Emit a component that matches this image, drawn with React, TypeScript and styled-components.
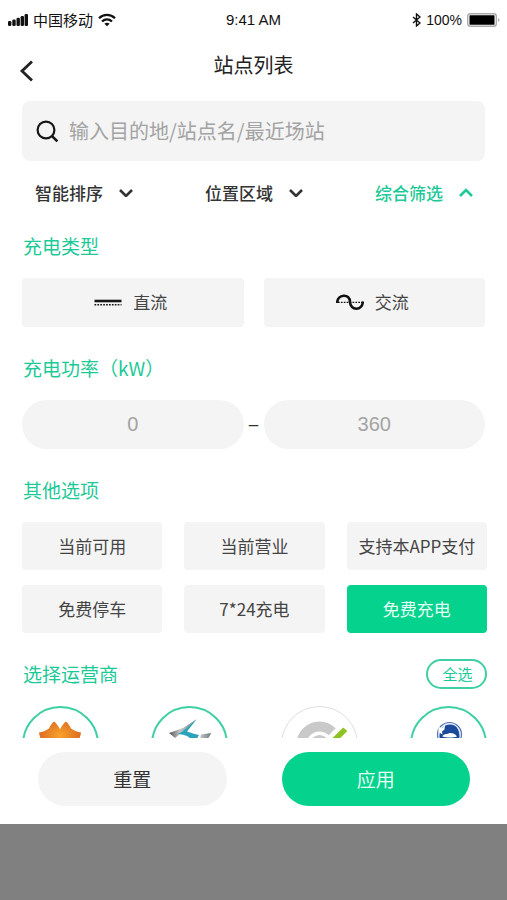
import React, { useState } from "react";
import styled, { createGlobalStyle } from "styled-components";

const green = "#05d38d";
const greenText = "#1cc997";
const fill = "#f4f4f4";

const GlobalStyle = createGlobalStyle`
  *, *::before, *::after { box-sizing: border-box; }
  body {
    margin: 0;
    background: #808080;
    color: #333;
    font-family: "Noto Sans CJK SC", sans-serif;
  }
  button, input { font-family: inherit; }
  button { border: 0; padding: 0; background: none; color: inherit; cursor: pointer; }
`;

const Sheet = styled.main`
  display: flex;
  flex-direction: column;
  height: calc(100vh - 76px);
  background: #fff;
`;

const StatusBar = styled.div`
  display: grid;
  grid-template-columns: 1fr auto 1fr;
  align-items: center;
  flex: none;
  height: 40px;
  padding: 0 7px;
  color: #111;
  font-size: 15px;
  line-height: 20px;
`;

const StatusGroup = styled.div<{ $end?: boolean }>`
  display: flex;
  align-items: center;
  justify-content: ${(p) => (p.$end ? "flex-end" : "flex-start")};
  gap: 5px;
`;

const Latin = styled.span<{ $size: number }>`
  font-family: "Liberation Sans", sans-serif;
  font-size: ${(p) => p.$size}px;
`;

const Header = styled.header`
  display: grid;
  grid-template-columns: 1fr auto 1fr;
  flex: none;
  height: 50px;
  padding: 0 19px;
`;

const BackButton = styled.button`
  display: flex;
  align-items: center;
  width: 32px;
  padding-top: 12px;
`;

const Title = styled.h1`
  margin: 0;
  color: #222;
  font-size: 20px;
  font-weight: 400;
  line-height: 50px;
`;

const SearchBox = styled.label`
  display: flex;
  align-items: center;
  flex: none;
  gap: 10px;
  height: 60px;
  margin: 11px 22px 0;
  padding: 0 14px;
  border-radius: 8px;
  background: ${fill};
`;

const SearchInput = styled.input`
  flex: 1;
  min-width: 0;
  border: 0;
  padding: 0;
  outline: 0;
  background: transparent;
  color: #333;
  font-size: 20px;
  line-height: 30px;
  &::placeholder { color: #a3a3a3; opacity: 1; }
`;

const Tabs = styled.nav`
  display: flex;
  justify-content: space-between;
  flex: none;
  height: 64px;
  padding: 0 34px 2px 35px;
`;

const Tab = styled.button<{ $active: boolean }>`
  display: flex;
  align-items: center;
  gap: 16px;
  color: ${(p) => (p.$active ? greenText : "#333")};
  font-size: 17px;
  font-weight: 500;
`;

const Filters = styled.div`
  display: flex;
  flex: 1;
  flex-direction: column;
  gap: 26px;
  min-height: 0;
  padding: 6px 20px 0 22px;
  overflow-x: hidden;
  overflow-y: auto;
  scrollbar-width: none;
`;

const Section = styled.section<{ $inset?: boolean }>`
  display: flex;
  flex: none;
  flex-direction: column;
  gap: 17px;
  padding-right: ${(p) => (p.$inset ? 2 : 0)}px;
`;

const SectionHead = styled.div`
  display: flex;
  align-items: center;
  justify-content: space-between;
`;

const SectionTitle = styled.h2`
  margin: 0;
  padding-left: 1px;
  color: ${greenText};
  font-size: 19px;
  font-weight: 400;
  line-height: 30px;
`;

const OptionGrid = styled.div<{ $columns: number }>`
  display: grid;
  grid-template-columns: repeat(${(p) => p.$columns}, minmax(0, 1fr));
  gap: 15px ${(p) => (p.$columns === 2 ? 20 : 22)}px;
`;

const Option = styled.button<{ $on: boolean; $tall?: boolean }>`
  display: flex;
  align-items: center;
  justify-content: center;
  gap: 11px;
  height: ${(p) => (p.$tall ? 49 : 48)}px;
  padding: 0 ${(p) => (p.$tall ? 4 : 0)}px 2px 0;
  border-radius: 4px;
  background: ${(p) => (p.$on ? green : fill)};
  color: ${(p) => (p.$on ? "#e4fff4" : "#444")};
  font-size: 17px;
  white-space: nowrap;
`;

const RangeRow = styled.div`
  display: flex;
  align-items: center;
`;

const RangeInput = styled.input`
  flex: 1;
  min-width: 0;
  height: 49px;
  border: 0;
  border-radius: 25px;
  outline: 0;
  background: ${fill};
  color: #333;
  font-family: "Liberation Sans", sans-serif;
  font-size: 20px;
  text-align: center;
  &::placeholder { color: #a3a3a3; opacity: 1; }
`;

const RangeDash = styled.span`
  width: 20px;
  color: #333;
  font-family: "Liberation Sans", sans-serif;
  font-size: 17px;
  line-height: 30px;
  text-align: center;
`;

const SelectAll = styled.button`
  width: 61px;
  height: 30px;
  padding-left: 2px;
  border: 2px solid #3fcfa4;
  border-radius: 15px;
  color: ${greenText};
  font-size: 15px;
  line-height: 24px;
`;

const Operators = styled.div`
  display: flex;
  justify-content: space-between;
`;

const Operator = styled.button<{ $on: boolean }>`
  width: 77px;
  height: 77px;
  border: ${(p) => (p.$on ? "2px solid #3fcfa4" : "1px solid #dedede")};
  border-radius: 50%;
  overflow: hidden;
  svg { display: block; margin: ${(p) => (p.$on ? -2 : -1)}px; }
`;

const Footer = styled.footer`
  display: flex;
  flex: none;
  gap: 55px;
  padding: 14px 37px 18px 38px;
`;

const Action = styled.button<{ $primary?: boolean }>`
  flex: 1;
  height: 54px;
  padding-bottom: 2px;
  border-radius: 27px;
  background: ${(p) => (p.$primary ? green : fill)};
  color: ${(p) => (p.$primary ? "#e4fff4" : "#333")};
  font-size: 19px;
`;

const SignalIcon = () => (
  <svg width="21" height="14" viewBox="0 0 21 14" fill="#111" aria-hidden="true">
    <rect x="1" y="8" width="3.4" height="5" rx="1.2" />
    <rect x="5.3" y="6.5" width="3.4" height="6.5" rx="1.2" />
    <rect x="9.5" y="4.8" width="3.4" height="8.2" rx="1.2" />
    <rect x="13.6" y="3" width="3.4" height="10" rx="1.2" />
    <rect x="17.6" y="1" width="3.4" height="12" rx="1.2" />
  </svg>
);

const WifiIcon = () => (
  <svg width="18" height="14" viewBox="0 0 18 14" fill="none" stroke="#111" strokeWidth="2.3" aria-hidden="true">
    <path d="M1 5.2C5.5.7 12.5.7 17 5.2" />
    <path d="M4 8.5c2.9-2.7 7.1-2.7 10 0" />
    <path d="M6.4 10.7c1.5-1.3 3.7-1.3 5.2 0L9 13.3z" fill="#111" stroke="none" />
  </svg>
);

const BluetoothIcon = () => (
  <svg width="9" height="14" viewBox="0 0 9 14" fill="none" stroke="#111" strokeWidth="1.4" aria-hidden="true">
    <path d="M1 4l7 6-3.5 3V1L8 4l-7 6" />
  </svg>
);

const BatteryIcon = () => (
  <svg width="33" height="14" viewBox="0 0 33 14" aria-hidden="true">
    <rect x="0.7" y="0.7" width="28.6" height="12.6" rx="2.5" fill="#fff" stroke="#aaa" strokeWidth="1.4" />
    <rect x="2.5" y="2.3" width="25" height="9.4" rx="0.5" fill="#000" />
    <path d="M31 5v4c2-.8 2-3.2 0-4z" fill="#aaa" />
  </svg>
);

const BackIcon = () => (
  <svg width="15" height="22" viewBox="0 0 15 22" fill="none" stroke="#222" strokeWidth="2.8" aria-hidden="true">
    <path d="M13 1.5L3 11l10 9.5" />
  </svg>
);

const SearchIcon = () => (
  <svg width="23" height="23" viewBox="0 0 23 23" fill="none" stroke="#161616" strokeWidth="2.2" aria-hidden="true">
    <circle cx="10" cy="10" r="8.4" />
    <path d="M15.8 15.8l5.6 5.6" strokeWidth="2.6" />
  </svg>
);

const Chevron = ({ up }: { up: boolean }) => (
  <svg width="14" height="10" viewBox="0 0 14 10" fill="none" stroke="currentColor" strokeWidth="2.6" aria-hidden="true">
    <path d={up ? "M1 9l6-6 6 6" : "M1 3l6 6 6-6"} />
  </svg>
);

const DirectIcon = () => (
  <svg width="28" height="16" viewBox="0 0 28 16" fill="none" stroke="#161616" aria-hidden="true">
    <path d="M0.5 7h27" strokeWidth="2.6" />
    <path d="M0.5 10.8h27" strokeWidth="1.6" strokeDasharray="1.7 1.2" />
  </svg>
);

const AlternatingIcon = () => (
  <svg width="28" height="18" viewBox="0 0 28 18" fill="none" stroke="#111" aria-hidden="true">
    <path d="M1.2 10C1.2 1 14 0 14 9s12.8 9 12.8-.5" strokeWidth="2.6" />
    <path d="M2 9.3h25" strokeWidth="1.2" strokeDasharray="1.7 1.2" />
  </svg>
);

const LotusLogo = () => (
  <svg width="78" height="78" viewBox="0 0 78 78" aria-hidden="true">
    <defs>
      <radialGradient id="lotus" cx="0.5" cy="0.4" r="0.5">
        <stop offset="0" stopColor="#f9a32a" />
        <stop offset="1" stopColor="#dc6a22" />
      </radialGradient>
    </defs>
    <path d="M17 26.5c3.500-.5 6.500-1.500 10-4 1.500-3 3-5.500 5-7 2.500 2 4.500 4.500 6 8 1.500-3.500 3.500-6 6-8 2 1.500 3.500 4 5 7 3.500 2.500 6.500 3.500 10 4-1 9-8 17.500-21 23.500-13-6-20-14.500-21-23.500z" fill="url(#lotus)" />
  </svg>
);

const WingLogo = () => (
  <svg width="78" height="78" viewBox="0 0 78 78" aria-hidden="true">
    <defs>
      <linearGradient id="wing" x1="0" x2="1">
        <stop offset="0" stopColor="#555" />
        <stop offset="0.4" stopColor="#c6c6c6" />
        <stop offset="1" stopColor="#6c7c80" />
      </linearGradient>
    </defs>
    <path d="M45.7 13.3L31 26.500l-7 5.500-6-5 14-5z" fill="url(#wing)" />
    <path d="M45.7 13.3L36 25.500c4 1.500 8 2.500 12 3.500l-2 3.500h-7c-2-3-7-4-12-4.500l5-3z" fill="#2ba3ba" />
    <path d="M50 28.500l10-1.500c-1 4-4 7-10 10l-8 3 7-7z" fill="url(#wing)" />
  </svg>
);

const GaugeLogo = () => (
  <svg width="78" height="78" viewBox="0 0 78 78" aria-hidden="true">
    <path d="M54.7 22.3A23 23 0 1 0 54.7 54.7L47.7 47.7A13 13 0 1 1 47.7 29.3z" fill="#c9c9c9" />
    <circle cx="38.5" cy="38.5" r="9.5" fill="#c9c9c9" />
    <path d="M62.3 21.5l4 3.5-20 20-4-4z" fill="#8ec21f" />
  </svg>
);

const DolphinLogo = () => (
  <svg width="78" height="78" viewBox="0 0 78 78" aria-hidden="true">
    <circle cx="39.5" cy="28.5" r="12" fill="#e8effa" stroke="#5575b6" strokeWidth="1.2" />
    <path d="M29.5 31C29 23 34 18.5 40 18.5c6 0 9.5 4.5 9.5 12.5-2 5-5.5 7-10 7s-8.500-2-10-7z" fill="#1b4a9c" />
    <path d="M28.5 21l3.5 1 3-3-.5 4.5-2.5 2 .5 3-4-2.5z" fill="#fff" />
    <path d="M32.5 30.500c1-3 4-2 6-3s6-.5 8.500 3c-3 1.300-11 1.500-14.500 0z" fill="#fff" />
  </svg>
);

const tabs = ["智能排序", "位置区域", "综合筛选"];
const extras = ["当前可用", "当前营业", "支持本APP支付", "免费停车", "7*24充电", "免费充电"];
const operators = [
  { id: "lotus", label: "运营商一", logo: <LotusLogo /> },
  { id: "wing", label: "运营商二", logo: <WingLogo /> },
  { id: "gauge", label: "运营商三", logo: <GaugeLogo /> },
  { id: "dolphin", label: "运营商四", logo: <DolphinLogo /> },
];

export default function App() {
  const [tab, setTab] = useState("综合筛选");
  const [selected, setSelected] = useState<string[]>(["免费充电", "lotus", "wing", "dolphin"]);
  const has = (id: string) => selected.includes(id);
  const toggle = (id: string) =>
    setSelected((s) => (s.includes(id) ? s.filter((x) => x !== id) : [...s, id]));
  const selectAll = () =>
    setSelected((s) => Array.from(new Set([...s, ...operators.map((o) => o.id)])));

  return (
    <>
      <GlobalStyle />
      <Sheet>
        <StatusBar>
          <StatusGroup>
            <SignalIcon />
            <span>中国移动</span>
            <WifiIcon />
          </StatusGroup>
          <Latin $size={15}>9:41 AM</Latin>
          <StatusGroup $end>
            <BluetoothIcon />
            <Latin $size={14}>100%</Latin>
            <BatteryIcon />
          </StatusGroup>
        </StatusBar>
        <Header>
          <BackButton aria-label="返回">
            <BackIcon />
          </BackButton>
          <Title>站点列表</Title>
        </Header>
        <SearchBox>
          <SearchIcon />
          <SearchInput type="text" aria-label="搜索" placeholder="输入目的地/站点名/最近场站" />
        </SearchBox>
        <Tabs>
          {tabs.map((t) => (
            <Tab key={t} $active={t === tab} aria-expanded={t === tab} onClick={() => setTab(t)}>
              {t}
              <Chevron up={t === tab} />
            </Tab>
          ))}
        </Tabs>
        <Filters>
          <Section $inset>
            <SectionTitle>充电类型</SectionTitle>
            <OptionGrid $columns={2}>
              <Option $tall $on={has("直流")} aria-pressed={has("直流")} onClick={() => toggle("直流")}>
                <DirectIcon />
                直流
              </Option>
              <Option $tall $on={has("交流")} aria-pressed={has("交流")} onClick={() => toggle("交流")}>
                <AlternatingIcon />
                交流
              </Option>
            </OptionGrid>
          </Section>
          <Section $inset>
            <SectionTitle>充电功率（kW）</SectionTitle>
            <RangeRow>
              <RangeInput type="text" inputMode="numeric" aria-label="最小功率" placeholder="0" />
              <RangeDash>–</RangeDash>
              <RangeInput type="text" inputMode="numeric" aria-label="最大功率" placeholder="360" />
            </RangeRow>
          </Section>
          <Section>
            <SectionTitle>其他选项</SectionTitle>
            <OptionGrid $columns={3}>
              {extras.map((e) => (
                <Option key={e} $on={has(e)} aria-pressed={has(e)} onClick={() => toggle(e)}>
                  {e}
                </Option>
              ))}
            </OptionGrid>
          </Section>
          <Section>
            <SectionHead>
              <SectionTitle>选择运营商</SectionTitle>
              <SelectAll onClick={selectAll}>全选</SelectAll>
            </SectionHead>
            <Operators>
              {operators.map((o) => (
                <Operator
                  key={o.id}
                  $on={has(o.id)}
                  aria-label={o.label}
                  aria-pressed={has(o.id)}
                  onClick={() => toggle(o.id)}
                >
                  {o.logo}
                </Operator>
              ))}
            </Operators>
          </Section>
        </Filters>
        <Footer>
          <Action onClick={() => setSelected([])}>重置</Action>
          <Action $primary>应用</Action>
        </Footer>
      </Sheet>
    </>
  );
}
